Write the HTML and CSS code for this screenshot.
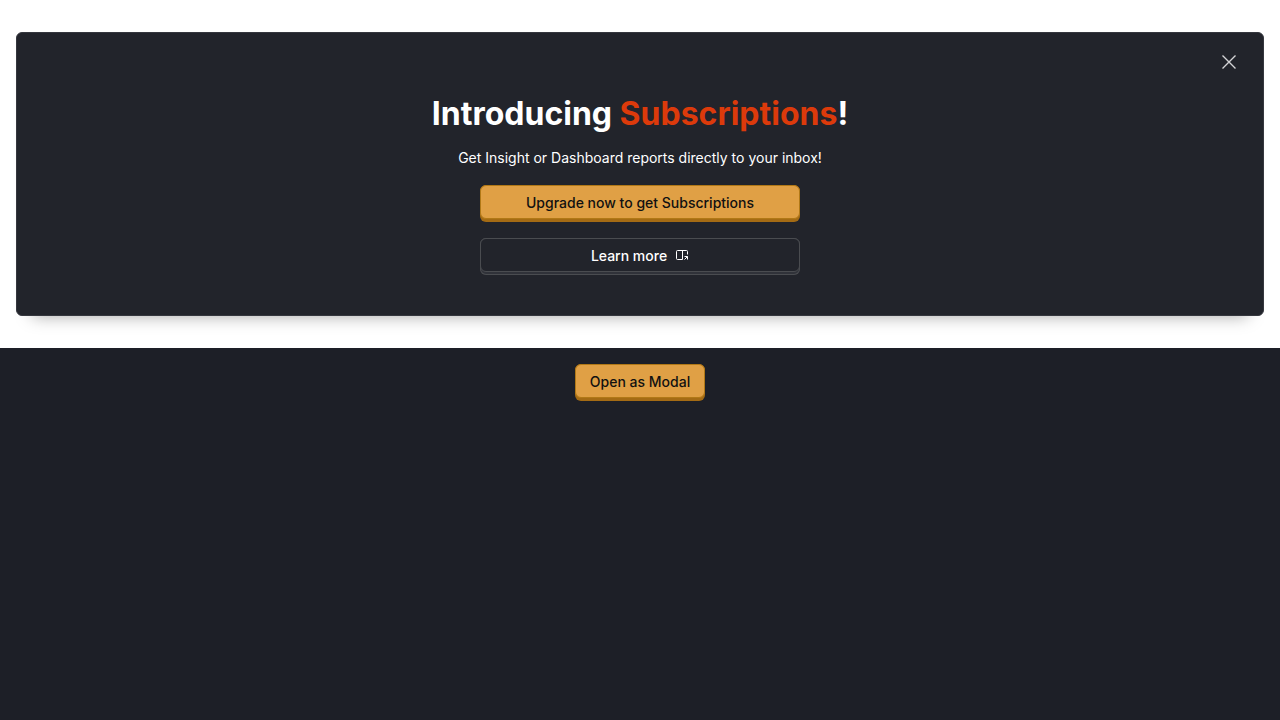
FILE: index.html
```html
<!DOCTYPE html>
<html lang="en">
<head>
<meta charset="utf-8">
<title>Subscriptions</title>
<link rel="stylesheet" href="styles.css">
</head>
<body>
<div class="stage">
  <section class="modal">
    <button class="close" type="button" aria-label="Close">
      <svg width="24" height="24" viewBox="0 0 24 24" fill="none" stroke="currentColor" stroke-width="1.4"><path d="M5.5 5.5l13 13M18.5 5.5l-13 13"/></svg>
    </button>
    <div class="content">
      <h2 class="title">Introducing <span class="accent">Subscriptions</span>!</h2>
      <p class="description">Get Insight or Dashboard reports directly to your inbox!</p>
      <div class="actions">
        <button class="button primary" type="button"><span class="chrome">Upgrade now to get Subscriptions</span></button>
        <a class="button secondary" href="#"><span class="chrome">Learn more
          <svg width="14" height="14" viewBox="0 0 14 14" fill="none" stroke="currentColor"><path d="M7.5 10.5h-5a1 1 0 0 1-1-1v-7a1 1 0 0 1 1-1h9a1 1 0 0 1 1 1v3M7.5 1.5v9M9.5 10.5l3-3M9.5 7.5h3v3"/></svg>
        </span></a>
      </div>
    </div>
  </section>
</div>
<div class="launcher"><button class="button primary" type="button"><span class="chrome">Open as Modal</span></button></div>
</body>
</html>
```
FILE: styles.css
```css
* { box-sizing: border-box; }
body { margin: 0; background: #1d1f27; color: #fff; font: 14px/20px Inter, sans-serif; font-optical-sizing: none; }
.stage { padding: 32px 16px; background: #fff; }
.modal { position: relative; padding: 57px 24px 40px; border: 1px solid #35373e; border-radius: 6px; background: #22242b; box-shadow: 0 16px 16px -16px rgba(0, 0, 0, .35); }
.close { position: absolute; top: 17px; right: 22px; width: 24px; height: 24px; padding: 0; border: 0; background: none; color: #d4d4d6; }
.content { display: flex; flex-direction: column; align-items: center; text-align: center; }
.title { margin: 0 0 10px; font-size: 32px; line-height: 48px; font-weight: 700; }
.accent { color: #dc3a0b; }
.description { margin: 0 0 17px; }
.actions { display: flex; flex-direction: column; gap: 16px; width: 320px; max-width: 100%; }
.button { display: block; padding: 0 0 3px; border: 0; border-radius: 6px; font: 500 14px/20px Inter, sans-serif; font-optical-sizing: none; text-decoration: none; cursor: pointer; }
.chrome { display: flex; align-items: center; justify-content: center; gap: 8px; padding: 7px 14px 5px; border: 1px solid; border-radius: 6px; }
.primary { background: #a46b14; color: #111; }
.primary .chrome { background: #e0a045; border-color: #b17816; }
.secondary { background: #303239; color: #fff; box-shadow: inset 0 0 0 1px #4a4c50; }
.secondary .chrome { background: #22242b; border-color: #4a4c50; }
.launcher { display: flex; justify-content: center; padding: 16px; }
```
